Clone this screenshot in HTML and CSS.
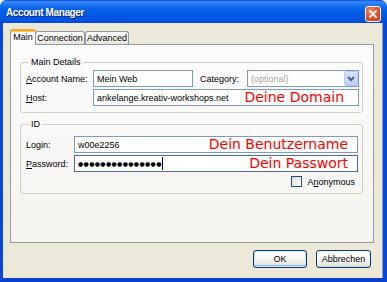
FILE: index.html
```html
<!DOCTYPE html>
<html>
<head>
<meta charset="utf-8">
<link rel="stylesheet" href="styles.css">
</head>
<body>
<div class="window">
  <div class="titlebar">
    <span class="title">Account Manager</span>
    <span class="close"><svg width="16" height="16" viewBox="0 0 16 16"><path d="M4.5 4.5 L11.5 11.5 M11.5 4.5 L4.5 11.5" stroke="#fff" stroke-width="2" stroke-linecap="square"/></svg></span>
  </div>
  <div class="frame">
    <div class="tabs">
      <div class="tab active">Main</div>
      <div class="tab t-conn">Connection</div>
      <div class="tab t-adv">Advanced</div>
    </div>
    <div class="panel">
      <fieldset class="group main-details">
        <legend>Main Details</legend>
        <div class="grid-main">
          <label class="lbl"><u>A</u>ccount Name:</label>
          <div class="input">Mein Web</div>
          <label class="lbl cat">Cate<u>g</u>ory:</label>
          <div class="select"><span class="placeholder">(optional)</span><span class="dd"><svg width="14" height="15" viewBox="0 0 14 15"><path d="M4 6 L7 9 L10 6" fill="none" stroke="#4D6185" stroke-width="2"/></svg></span></div>
          <label class="lbl"><u>H</u>ost:</label>
          <div class="input host"><span>ankelange.kreativ-workshops.net</span><span class="note note-domain">Deine Domain</span></div>
        </div>
      </fieldset>
      <fieldset class="group id-group">
        <legend>ID</legend>
        <div class="grid-id">
          <label class="lbl">Login:</label>
          <div class="input"><span>w00e2256</span><span class="note note-id">Dein Benutzername</span></div>
          <label class="lbl"><u>P</u>assword:</label>
          <div class="input pw"><span class="dots">●●●●●●●●●●●●●●●</span><span class="caret"></span><span class="note note-id">Dein Passwort</span></div>
        </div>
        <div class="check-row">
          <span class="checkbox"></span>
          <span>A<u>n</u>onymous</span>
        </div>
      </fieldset>
    </div>
    <div class="buttons">
      <div class="btn default">OK</div>
      <div class="btn cancel">Abbrechen</div>
    </div>
  </div>
</div>
</body>
</html>
```
FILE: styles.css
```css
html, body {
  margin: 0;
  padding: 0;
  background: #ffffff;
}
body {
  font-family: "Liberation Sans", Arial, sans-serif;
  font-size: 9px;
  color: #000;
}
.window {
  width: 387px;
  height: 282px;
  display: flex;
  flex-direction: column;
}
.titlebar {
  height: 23px;
  flex: none;
  box-sizing: border-box;
  display: flex;
  align-items: center;
  padding: 0 5px 0 6px;
  border-radius: 6px 6px 0 0;
  background: linear-gradient(#0A4BD8 0%, #3C8CF8 8%, #2A7DF5 16%, #0E67EC 30%, #035EE8 50%, #0258E4 70%, #0052DE 90%, #0047CF 100%);
}
.title {
  color: #fff;
  font-weight: bold;
  font-size: 10px;
  letter-spacing: -0.4px;
  text-shadow: 1px 1px 0 #0A1E8C;
  padding-top: 2px;
}
.close {
  margin-left: auto;
  width: 16px;
  height: 16px;
  box-sizing: border-box;
  border: 1px solid #fff;
  border-radius: 3px;
  background: radial-gradient(circle at 35% 30%, #F08A6A 0%, #E0512F 50%, #C83A18 100%);
  display: flex;
  align-items: center;
  justify-content: center;
  margin-top: 4px;
  margin-right: 1px;
}
.close svg { display: block; }
.frame {
  flex: 1;
  background: #ECE9D8;
  border-left: 3px solid #0A47D6;
  border-right: 4px solid #0A47D6;
  border-bottom: 4px solid #0A3FCF;
  box-shadow: inset -1px 0 0 #8EA0C4;
  display: flex;
  flex-direction: column;
}
.tabs {
  display: flex;
  align-items: flex-end;
  padding: 6px 0 0 7px;
  height: 16px;
  margin-bottom: -1px;
  position: relative;
  z-index: 1;
}
.tab {
  box-sizing: border-box;
  height: 13px;
  border: 1px solid #919B9C;
  border-bottom: none;
  border-radius: 3px 3px 0 0;
  background: linear-gradient(#FFFFFF, #F3F2EE 60%, #E6E4DB);
  text-align: center;
  line-height: 12px;
  margin-bottom: 1px;
}
.tab.active {
  width: 26px;
  height: 16px;
  margin-bottom: 0;
  border-top: 2px solid #F2A33A;
  background: #FCFCFE;
  line-height: 13px;
  box-shadow: inset 0 1px 0 #FFC83C;
}
.t-conn { width: 50px; margin-left: -1px; }
.t-adv { width: 44px; margin-left: 0; }
.panel {
  margin-left: 7px;
  width: 364px;
  height: 199px;
  box-sizing: border-box;
  border: 1px solid #919B9C;
  background: linear-gradient(#FCFCFE, #F4F3EE);
  padding: 12px 10px 0 9px;
}
.group {
  margin: 0;
  border: 1px solid #D0D0BF;
  border-radius: 3px;
  min-width: 0;
}
.group legend {
  padding: 0 2px;
  margin-left: 3px;
  line-height: 11px;
  color: #000;
}
.main-details {
  padding: 2px 3px 6px 5px;
}
.id-group {
  margin-top: 6px;
  padding: 6px 4px 6px 5px;
}
.grid-main {
  display: grid;
  grid-template-columns: 67px 100px 54px 1fr;
  grid-auto-rows: 17px;
  row-gap: 2px;
  align-items: center;
}
.grid-main .host { grid-column: 2 / 5; }
.lbl { white-space: nowrap; }
.cat { padding-left: 7px; }
.input {
  box-sizing: border-box;
  height: 17px;
  border: 1px solid #7F9DB9;
  background: #fff;
  display: flex;
  align-items: center;
  padding-left: 3px;
  white-space: nowrap;
  overflow: hidden;
}
.select {
  box-sizing: border-box;
  height: 17px;
  border: 1px solid #7F9DB9;
  background: #fff;
  display: flex;
  align-items: center;
  padding-left: 3px;
}
.placeholder { color: #A5A5A5; }
.dd {
  margin-left: auto;
  margin-right: 0;
  width: 14px;
  height: 15px;
  box-sizing: border-box;
  border: 1px solid #B9CDF6;
  border-radius: 2px;
  background: linear-gradient(#D7E3FD, #BCD0F8);
}
.dd svg { display: block; margin: -1px; }
.note {
  font-family: "DejaVu Sans", sans-serif;
  font-size: 14px;
  color: #FF0000;
  margin-left: auto;
  line-height: 15px;
}
.note-domain { padding-right: 14px; }
.note-id { padding-right: 9px; }
.grid-id {
  display: grid;
  grid-template-columns: 48px 1fr;
  grid-auto-rows: 17px;
  row-gap: 2px;
  align-items: center;
}
.pw { border-color: #4E6A8F; }
.dots {
  font-family: "DejaVu Sans", sans-serif;
  font-size: 6px;
  letter-spacing: 0.35px;
  line-height: 10px;
}
.caret {
  width: 1px;
  height: 13px;
  background: #000;
  margin-left: 0;
}
.check-row {
  display: flex;
  justify-content: flex-end;
  align-items: center;
  gap: 5px;
  margin-top: 4px;
  height: 11px;
  padding-right: 3px;
}
.checkbox {
  width: 11px;
  height: 11px;
  box-sizing: border-box;
  border: 1px solid #1C5180;
  background: linear-gradient(135deg, #DCDCD7, #FFFFFF);
}
.buttons {
  display: flex;
  justify-content: flex-end;
  gap: 9px;
  margin-top: 7px;
  padding-right: 12px;
}
.btn {
  box-sizing: border-box;
  height: 18px;
  border: 1px solid #003C74;
  border-radius: 3px;
  background: linear-gradient(#FFFFFF, #F4F3EE 60%, #E3E1D8 90%, #D6D0C5);
  display: flex;
  align-items: center;
  justify-content: center;
}
.btn.default {
  width: 54px;
  box-shadow: inset 0 0 0 1px #CEE7FF, inset 0 -1px 0 1px #98B8EA;
}
.btn.cancel { width: 55px; }
```
